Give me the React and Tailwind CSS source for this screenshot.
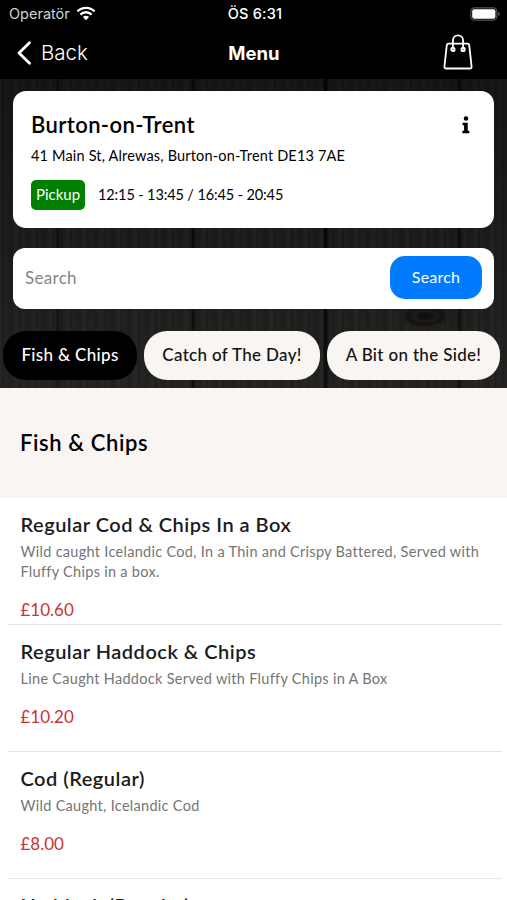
import React, { useState } from 'react';

const categories = [
  { name: 'Fish & Chips', box: 'w-[134px]' },
  { name: 'Catch of The Day!', box: 'w-[176px]' },
  { name: 'A Bit on the Side!', box: 'w-[173px]' },
];

const items = [
  {
    name: 'Regular Cod & Chips In a Box',
    lines: ['Wild caught Icelandic Cod, In a Thin and Crispy Battered, Served with', 'Fluffy Chips in a box.'],
    price: '£10.60',
  },
  {
    name: 'Regular Haddock & Chips',
    lines: ['Line Caught Haddock Served with Fluffy Chips in A Box'],
    price: '£10.20',
  },
  { name: 'Cod (Regular)', lines: ['Wild Caught, Icelandic Cod'], price: '£8.00' },
  { name: 'Haddock (Regular)', lines: [], price: '' },
];

const WifiIcon = () => (
  <svg width="20" height="15" viewBox="0 0 20 15" fill="none" stroke="#fff" strokeWidth="2.3">
    <path d="M1.4 5.4a12.2 12.2 0 0 1 17.2 0" />
    <path d="M4.4 8.6a7.9 7.9 0 0 1 11.2 0" />
    <path d="M10 14.2 6.9 11a4.4 4.4 0 0 1 6.2 0z" fill="#fff" stroke="none" />
  </svg>
);

const BatteryIcon = () => (
  <svg width="31" height="14" viewBox="0 0 31 14">
    <rect x="0.8" y="0.8" width="26" height="12.4" rx="3.6" fill="none" stroke="#555" strokeWidth="1.2" />
    <rect x="2.2" y="2.2" width="23.2" height="9.6" rx="2" fill="#fff" />
    <path d="M28.3 4.8c1.9.6 1.9 3.8 0 4.4z" fill="#666" />
  </svg>
);

const BagIcon = () => (
  <svg width="30" height="36" viewBox="0 0 30 36" fill="none" stroke="#fff" strokeWidth="1.8" strokeLinecap="round" strokeLinejoin="round">
    <path d="M5.6 9.6h18.8c1 0 1.700.6 1.800 1.600l2.400 21.400c.1 1.200-.7 1.900-1.800 1.900H3.200c-1.100 0-1.900-.7-1.800-1.900L3.800 11.200c.1-1 .8-1.600 1.800-1.600z" />
    <path d="M9.900 14.800V6.600c0-6.900 10.200-6.900 10.200 0v8.200" />
    <circle cx="9.900" cy="15.400" r="1.700" />
    <circle cx="20.100" cy="15.400" r="1.700" />
  </svg>
);

const InfoIcon = () => (
  <svg width="8" height="18" viewBox="0 0 8 18" fill="#000">
    <circle cx="4" cy="2.500" r="2.300" />
    <path d="M.6 6.700h5.100v8h1.700v2.600H.4v-2.600h1.700V9.300H.6z" />
  </svg>
);

// Dark wooden planks behind the cards
const Planks = () => (
  <div className="absolute inset-0 bg-[#1a1a19]">
    <div className="absolute inset-0 bg-[repeating-linear-gradient(90deg,rgba(255,255,255,0.03)_0px,rgba(0,0,0,0.1)_3px,rgba(255,255,255,0.02)_5px,rgba(0,0,0,0.06)_11px,rgba(255,255,255,0.03)_17px)]" />
    <div className="absolute inset-0 bg-[linear-gradient(90deg,transparent_56px,#0c0c0c_57px,#0e0e0e_58px,transparent_60px,transparent_191px,#0a0a0a_192px,#0c0c0c_194px,transparent_196px,transparent_323px,#070707_324px,#090909_327px,transparent_329px,transparent_457px,#0a0a0a_458px,#0c0c0c_460px,transparent_462px)]" />
    <div className="absolute inset-0 bg-[linear-gradient(180deg,rgba(0,0,0,0.25),transparent_50%,rgba(255,255,255,0.03))]" />
    <div className="absolute top-[224px] left-[398px] h-[26px] w-[54px] bg-[radial-gradient(ellipse,#11100f_15%,#1e1b18_30%,#131211_45%,#1f1c1a_58%,transparent_70%)]" />
  </div>
);

const App = () => {
  const [active, setActive] = useState('Fish & Chips');
  const [search, setSearch] = useState('');

  return (
    <div className="h-[900px] w-[507px] overflow-hidden bg-white font-[Lato,sans-serif]">
      <header className="h-[79px] bg-black font-[Inter,sans-serif] text-white">
        <div className="grid h-[27px] grid-cols-3 items-center pr-[6px] pl-[9px]">
          <div className="flex items-center gap-[7px]">
            <span className="text-[14.5px] text-[#d0d0d0]">Operatör</span>
            <div className="-ml-[1px] -mt-[1px]">
              <WifiIcon />
            </div>
          </div>
          <span className="text-center text-[14.5px] font-medium tracking-[0.2px]">ÖS 6:31</span>
          <div className="flex justify-end">
            <BatteryIcon />
          </div>
        </div>
        <div className="grid h-[52px] grid-cols-3 items-center pr-[34px] pl-[17px]">
          <button className="flex items-center gap-[10px] text-left">
            <svg width="14" height="24" viewBox="0 0 14 24" fill="none" stroke="#fff" strokeWidth="2.8" strokeLinecap="round" strokeLinejoin="round">
              <path d="M12.500 1.800 2 12l10.500 10.200" />
            </svg>
            <span className="text-[20.5px] font-light">Back</span>
          </button>
          <h1 className="pt-[1px] pl-[18px] text-center text-[18.5px] font-bold">Menu</h1>
          <div className="flex justify-end pb-[2px]">
            <BagIcon />
          </div>
        </div>
      </header>

      <section className="relative h-[309px]">
        <Planks />
        <div className="relative pt-[12px]">
          <div className="mx-[13px] h-[137px] rounded-[13px] bg-white pt-[18px] pr-[24px] pl-[18px] text-black">
            <div className="flex items-center justify-between">
              <h2 className="text-[22px] leading-[32px] font-semibold tracking-[0.4px]">Burton-on-Trent</h2>
              <InfoIcon />
            </div>
            <p className="mt-[4px] text-[14.5px] leading-[22px] tracking-[0.17px]">41 Main St, Alrewas, Burton-on-Trent DE13 7AE</p>
            <div className="mt-[13px] flex items-center gap-[13px]">
              <span className="flex h-[30px] w-[54px] items-center justify-center rounded-[5px] bg-[#008000] pb-[2px] text-[15px] text-white">Pickup</span>
              <span className="text-[14.5px] tracking-[-0.12px]">12:15 - 13:45 / 16:45 - 20:45</span>
            </div>
          </div>

          <div className="mx-[13px] mt-[20px] flex h-[61px] items-center rounded-[12px] bg-white pr-[12px] pl-[12px]">
            <input
              type="text"
              placeholder="Search"
              value={search}
              onChange={(e) => setSearch(e.target.value)}
              className="min-w-0 flex-1 pb-[2px] text-[17px] tracking-[0.3px] outline-none placeholder:text-[#858585]"
            />
            <button className="mb-[2px] h-[43px] w-[92px] rounded-[15px] bg-[#007aff] pb-[2px] text-[16px] tracking-[0.2px] text-white">Search</button>
          </div>

          <div className="mt-[22px] ml-[3px] flex gap-[7px]">
            {categories.map((cat) => (
              <button
                key={cat.name}
                onClick={() => setActive(cat.name)}
                className={`h-[49px] shrink-0 rounded-[23px] pb-[2px] text-[17px] font-medium tracking-[0.33px] whitespace-nowrap ${cat.box} ${
                  active === cat.name ? 'bg-black text-white' : 'bg-[#f8f5f2] text-[#111]'
                }`}
              >
                {cat.name}
              </button>
            ))}
          </div>
        </div>
      </section>

      <div className="flex h-[110px] items-center bg-[#f8f5f2] pl-[20px]">
        <h2 className="pb-[1px] text-[22px] font-semibold tracking-[0.6px] text-black">Fish & Chips</h2>
      </div>

      <ul className="pr-[5px] pl-[8px]">
        {items.map((item) => (
          <li key={item.name} className="flex h-[127px] flex-col border-b border-[#e5e5e5] pt-[12px] pl-[12.5px]">
            <h3 className="text-[20px] leading-[28px] font-semibold tracking-[0.5px] text-[#1c1c1e]">{item.name}</h3>
            <div className="mt-[4px] text-[14.5px] leading-[20px] tracking-[0.29px] text-[#757575]">
              {item.lines.map((line) => (
                <p key={line} className="whitespace-nowrap">{line}</p>
              ))}
            </div>
            <p className="mt-[16px] text-[17px] leading-[24px] text-[#c93434]">{item.price}</p>
          </li>
        ))}
      </ul>
    </div>
  );
};

export default App;
